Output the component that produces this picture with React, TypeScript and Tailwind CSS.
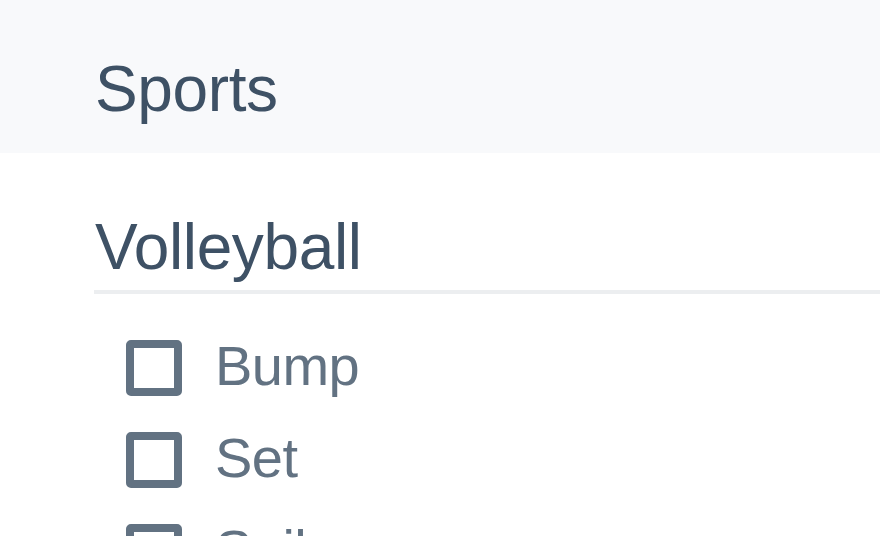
import React, { useState } from 'react';

const SKILLS = ['Bump', 'Set', 'Spike'];

export default function App() {
  const [checked, setChecked] = useState<Record<string, boolean>>({});

  const toggle = (name: string) => setChecked((c) => ({ ...c, [name]: !c[name] }));

  return (
    <div className="h-screen overflow-hidden bg-white font-['Liberation_Sans',Arial,sans-serif]">
      {/* Header */}
      <header className="h-[153px] bg-[#f8f9fb] pl-[95px] pt-[57px]">
        <h1 className="text-[64px] leading-[64px] tracking-[-0.006em] text-[#3e5165]">Sports</h1>
      </header>

      {/* Section */}
      <section className="pl-[94px] pt-[62px]">
        <h2 className="border-b-4 border-[#eceef0] pb-[11px] pl-px text-[64px] leading-[64px] tracking-[-0.006em] text-[#3e5165]">
          Volleyball
        </h2>

        <ul className="pl-[32px] pt-[28px]">
          {SKILLS.map((name) => (
            <li key={name} className="flex h-[92px] items-center">
              <button
                onClick={() => toggle(name)}
                className="flex h-[56px] w-[56px] shrink-0 items-center justify-center rounded-[5px] border-[8px] border-[#627282] bg-white"
              >
                {checked[name] && <span className="h-[20px] w-[20px] bg-[#627282]" />}
              </button>
              <span className="mb-[5px] ml-[33px] text-[56px] leading-[56px] tracking-[-0.01em] text-[#627282]">
                {name}
              </span>
            </li>
          ))}
        </ul>
      </section>
    </div>
  );
}
